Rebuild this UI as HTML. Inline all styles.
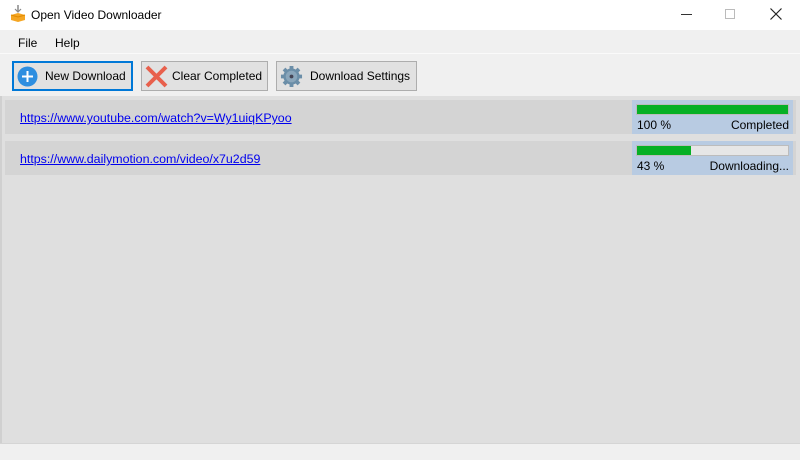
<!DOCTYPE html>
<html><head><style>
*{margin:0;padding:0;box-sizing:border-box}
body{width:800px;height:460px;overflow:hidden;font-family:"Liberation Sans",Arial,sans-serif;font-size:12px;color:#000;background:#f0f0f0;position:relative}
.abs{position:absolute}
.btn{position:absolute;top:61px;height:30px;border:1px solid #adadad;background:#e1e1e1;font-size:12px;line-height:28px}
.row{position:absolute;left:5px;width:791px;height:34px;background:#d4d4d4}
.row a{position:absolute;left:15px;top:11px;color:#0000ee;text-decoration:underline;font-size:12.4px}
.prog{position:absolute;left:627px;top:0;width:161px;height:34px;background:#b8cbe2}
.bar{position:absolute;left:4px;top:4px;width:153px;height:11px;background:#e6e6e6;border:1px solid #bcbcbc}
.fill{height:100%;background:#06b025}
.pl{position:absolute;left:5px;top:18px;font-size:12px}
.pr{position:absolute;right:4px;top:18px;font-size:12px}
</style></head><body>
<div class="abs" style="left:0;top:0;width:800px;height:30px;background:#fff"></div>
<svg class="abs" style="left:10px;top:5px" width="16" height="18" viewBox="0 0 16 18"><line x1="8" y1="0" x2="8" y2="6" stroke="#888" stroke-width="1.5"/><path d="M5 4 L8 7 L11 4" fill="none" stroke="#888" stroke-width="1.2"/><path d="M1 10 L8 8 L15 10 L15 15 L8 17 L1 15Z" fill="#f5a623"/><path d="M1 10 L8 12 L15 10" fill="none" stroke="#e08a00"/></svg>
<div class="abs" style="left:31px;top:8px;font-size:12px">Open Video Downloader</div>
<div class="abs" style="left:681px;top:14px;width:11px;height:1px;background:#333"></div>
<div class="abs" style="left:725px;top:9px;width:10px;height:10px;border:1px solid #bbb"></div>
<svg class="abs" style="left:770px;top:8px" width="12" height="12"><path d="M0.5 0.5L11.5 11.5M11.5 0.5L0.5 11.5" stroke="#222" stroke-width="1.2"/></svg>
<div class="abs" style="left:0;top:30px;width:800px;height:23px;background:#f0f0f0"></div>
<div class="abs" style="left:18px;top:36px">File</div>
<div class="abs" style="left:55px;top:36px">Help</div>
<div class="abs" style="left:0;top:53px;width:800px;height:1px;background:#fafafa"></div>
<div class="btn" style="left:12px;width:121px;border:2px solid #0078d7;line-height:26px">
<svg class="abs" style="left:3px;top:3px" width="21" height="21"><circle cx="10.5" cy="10.5" r="10" fill="#2d8ee0"/><path d="M10.5 5v11M5 10.5h11" stroke="#fff" stroke-width="2"/></svg>
<span class="abs" style="left:31px;top:0">New Download</span></div>
<div class="btn" style="left:141px;width:127px">
<svg class="abs" style="left:2px;top:2px" width="25" height="25"><path d="M3 3L22 22M22 3L3 22" stroke="#e8604c" stroke-width="4"/></svg>
<span class="abs" style="left:30px;top:0">Clear Completed</span></div>
<div class="btn" style="left:276px;width:141px">
<svg class="abs" style="left:3px;top:3px" width="23" height="23" viewBox="0 0 24 24"><g fill="#6b8ea8"><circle cx="12" cy="12" r="8.5"/><g stroke="#6b8ea8" stroke-width="4"><path d="M12 1v22M1 12h22M4.2 4.2l15.6 15.6M19.8 4.2L4.2 19.8"/></g></g><circle cx="12" cy="12" r="6" fill="#8aa6bb"/><circle cx="12" cy="12" r="2" fill="#445"/></svg>
<span class="abs" style="left:33px;top:0">Download Settings</span></div>
<div class="abs" style="left:0;top:96px;width:800px;height:347px;background:#dfdfdf;border-left:2px solid #d0d0d0"></div>
<div class="row" style="top:100px"><a>https://www.youtube.com/watch?v=Wy1uiqKPyoo</a>
<div class="prog"><div class="bar"><div class="fill" style="width:100%"></div></div><span class="pl">100 %</span><span class="pr">Completed</span></div></div>
<div class="row" style="top:141px"><a>https://www.dailymotion.com/video/x7u2d59</a>
<div class="prog"><div class="bar"><div class="fill" style="width:36%"></div></div><span class="pl">43 %</span><span class="pr">Downloading...</span></div></div>
<div class="abs" style="left:0;top:443px;width:800px;height:1px;background:#d5d5d5"></div>
<div class="abs" style="left:0;top:444px;width:800px;height:16px;background:#f0f0f0"></div>
</body></html>
